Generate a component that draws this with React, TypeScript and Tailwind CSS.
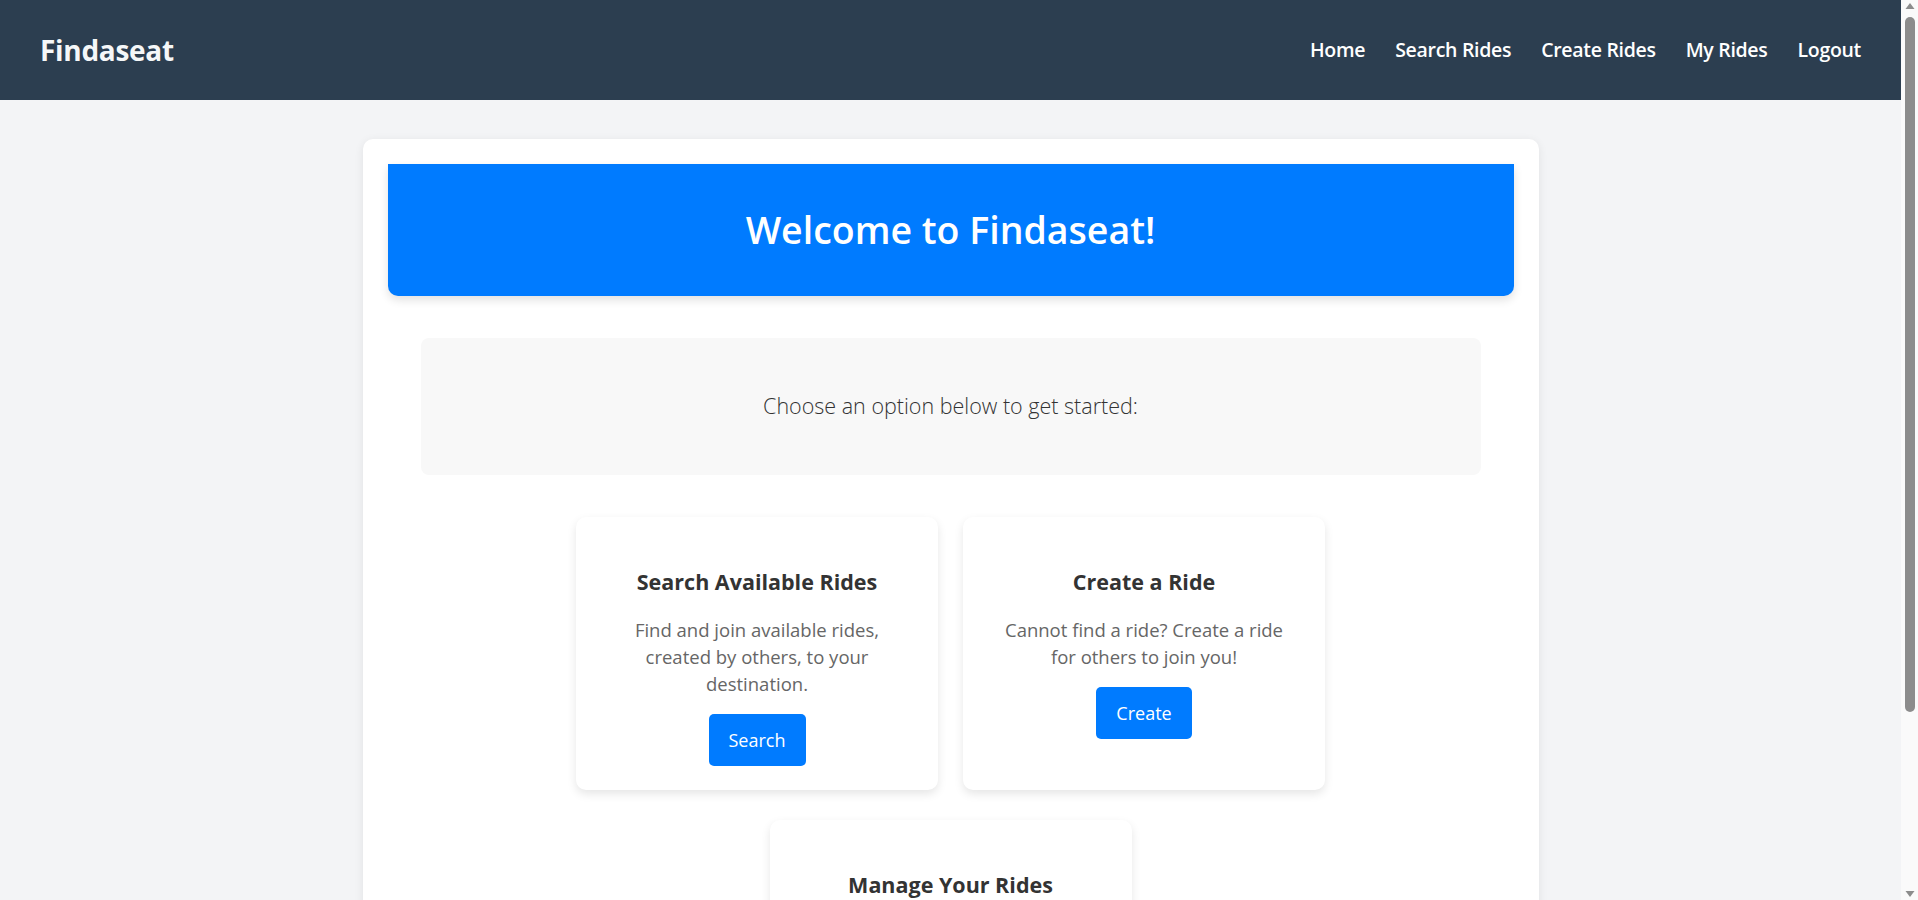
import React from 'react';

// Option cards shown on the landing page
interface OptionCard {
  title: string;
  lines: string[];
  action: string;
}

const options: OptionCard[] = [
  {
    title: 'Search Available Rides',
    lines: ['Find and join available rides,', 'created by others, to your', 'destination.'],
    action: 'Search',
  },
  {
    title: 'Create a Ride',
    lines: ['Cannot find a ride? Create a ride', 'for others to join you!'],
    action: 'Create',
  },
  {
    title: 'Manage Your Rides',
    lines: ['View and manage the rides you', 'have created or joined.'],
    action: 'My Rides',
  },
];

const navLinks = ['Home', 'Search Rides', 'Create Rides', 'My Rides', 'Logout'];

// Classic browser scrollbar, as it shows in the screenshot
const ScrollStrip: React.FC = () => (
  <aside className="w-[17px] h-screen sticky top-0 self-start bg-[#fafafa] flex flex-col items-center">
    <svg width="10" height="8" viewBox="0 0 10 8" className="mt-[2px]">
      <path d="M5 1 L9.5 7 H0.5 Z" fill="#8c8c8c" />
    </svg>
    <div className="mt-[7px] w-[10px] h-[695px] rounded-full bg-[#8c8c8c]" />
    <div className="flex-1" />
    <svg width="10" height="8" viewBox="0 0 10 8" className="mb-[2px]">
      <path d="M0.5 1 H9.5 L5 7 Z" fill="#8c8c8c" />
    </svg>
  </aside>
);

const App: React.FC = () => {
  return (
    <div className="flex bg-[#f3f4f6] font-['Open_Sans',sans-serif]">
      <div className="flex-1 min-w-0 min-h-screen pb-10">
        {/* Top navigation */}
        <nav className="h-[100px] bg-[#2c3e50] px-10 flex items-center justify-between">
          <a href="#" className="text-[28px] font-bold text-[#f5f7f8] tracking-[-0.3px]">
            Findaseat
          </a>
          <ul className="flex items-center gap-[30px]">
            {navLinks.map((link) => (
              <li key={link}>
                <a href="#" className="text-[19.5px] font-semibold text-white tracking-[-0.3px]">
                  {link}
                </a>
              </li>
            ))}
          </ul>
        </nav>

        <main className="pt-[39px] flex justify-center">
          <div className="w-[1176px] bg-white rounded-[10px] shadow-[0_2px_10px_rgba(0,0,0,0.08)] px-[25px] pt-[25px] pb-[40px]">
            {/* Welcome banner */}
            <header className="h-[132px] bg-[#007bff] rounded-b-[10px] shadow-[0_4px_10px_rgba(0,0,0,0.12)] flex items-center justify-center">
              <h1 className="text-[37.5px] font-semibold text-white">Welcome to Findaseat!</h1>
            </header>

            <section className="mx-[33px] mt-[42px] h-[137px] bg-[#f8f8f8] rounded-lg flex items-center justify-center">
              <p className="text-[21.5px] font-light text-[#333]">Choose an option below to get started:</p>
            </section>

            <div className="mx-[33px] mt-[42px] flex flex-wrap justify-center gap-x-[25px] gap-y-[30px]">
              {options.map((opt) => (
                <div
                  key={opt.title}
                  className="w-[362px] bg-white rounded-[10px] shadow-[0_4px_10px_rgba(0,0,0,0.1)] px-[20px] pt-[53px] pb-6 flex flex-col items-center text-center"
                >
                  <h3 className="text-[21.5px] leading-[24px] font-bold text-[#333]">{opt.title}</h3>
                  <p className="mt-[22px] text-[18.5px] leading-[27px] text-[#666]">
                    {opt.lines.map((line, i) => (
                      <span key={i} className="block whitespace-nowrap">
                        {line}
                      </span>
                    ))}
                  </p>
                  <button
                    type="button"
                    className="mt-[17px] h-[52px] px-5 bg-[#007bff] text-white text-[18px] rounded-[5px]"
                  >
                    {opt.action}
                  </button>
                </div>
              ))}
            </div>
          </div>
        </main>
      </div>
      <ScrollStrip />
    </div>
  );
};

export default App;
